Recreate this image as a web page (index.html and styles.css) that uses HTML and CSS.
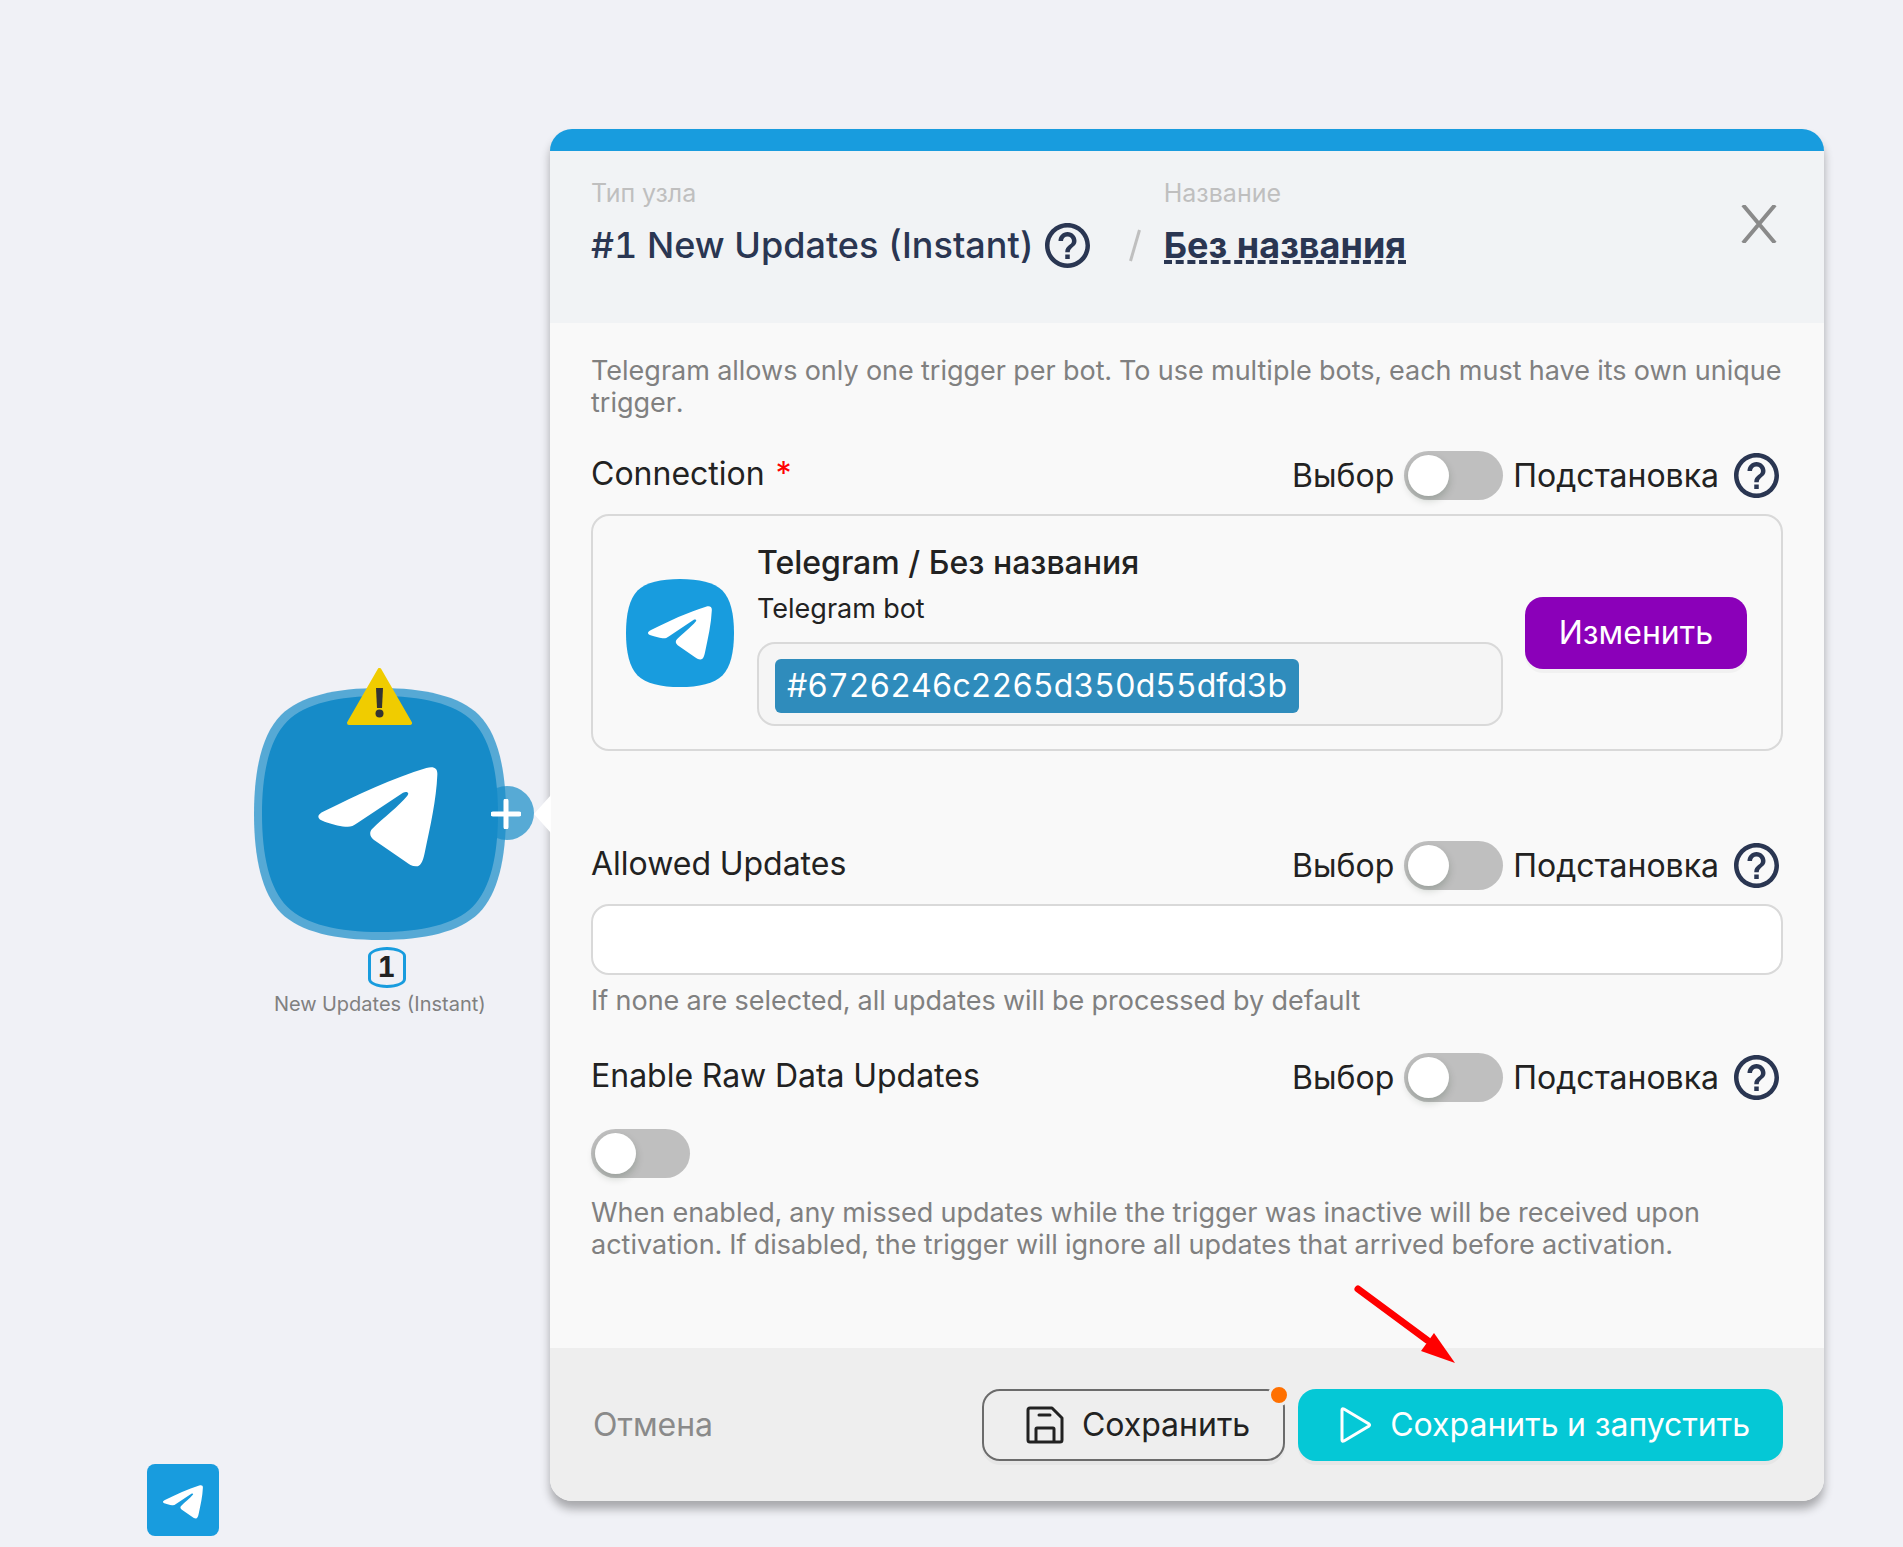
FILE: index.html
```html
<!DOCTYPE html>
<html lang="ru">
<head>
<meta charset="utf-8">
<title>New Updates (Instant)</title>
<link rel="stylesheet" href="styles.css">
</head>
<body>
<svg class="sprite" aria-hidden="true">
  <symbol id="help" viewBox="2 2 20 20"><path d="M11 18h2v-2h-2v2zm1-16C6.480 2 2 6.480 2 12s4.480 10 10 10 10-4.480 10-10S17.520 2 12 2zm0 18c-4.410 0-8-3.590-8-8s3.590-8 8-8 8 3.590 8 8-3.590 8-8 8zm0-14c-2.210 0-4 1.790-4 4h2c0-1.100.9-2 2-2s2 .9 2 2c0 2-3 1.750-3 5h2c0-2.250 3-2.500 3-5 0-2.210-1.790-4-4-4z"/></symbol>
  <symbol id="plane" viewBox="264 382 358 300"><path d="M281 515C380 466 488 415 588 385C612 379 622 386 621 405C618 480 600 560 583 640C577 668 570 681 557 680C545 680 535 673 527 667L430 600C418 591 416 577 426 567C460 533 505 500 531 468C539 458 528 454 518 459L380 551C368 560 358 563 345 561C325 559 300 552 283 546C258 538 258 526 281 515Z"/></symbol>
  <symbol id="squircle" viewBox="0 0 252 252"><path d="M0 126C0 82 8 46 27 27C46 8 82 0 126 0C170 0 206 8 225 27C244 46 252 82 252 126C252 170 244 206 225 225C206 244 170 252 126 252C82 252 46 244 27 225C8 206 0 170 0 126Z"/></symbol>
</svg>

<main class="canvas">
  <section class="node" aria-label="New Updates (Instant)">
    <div class="node-shape">
      <svg class="node-ring"><use href="#squircle"/></svg>
      <span class="node-port"></span>
      <svg class="node-core"><use href="#squircle"/></svg>
      <svg class="node-plane"><use href="#plane"/></svg>
      <button class="node-add" aria-label="Добавить узел">
        <svg viewBox="0 0 30 30"><path d="M15 2v26M2 15h26"/></svg>
      </button>
      <svg class="node-warning" viewBox="0 0 65 57">
        <path class="warning-sign" d="M32.500 2L63 55H2Z"/>
        <path class="warning-mark" d="M29 20h7l-1 20h-5z"/>
        <circle class="warning-mark" cx="32.500" cy="45.500" r="4"/>
      </svg>
    </div>
    <div class="node-number">1</div>
    <div class="node-label">New Updates (Instant)</div>
  </section>

  <button class="dock" aria-label="Telegram"><svg><use href="#plane"/></svg></button>

  <form class="panel">
    <span class="panel-pointer"></span>
    <header class="panel-header">
      <div class="head-col">
        <span class="caption">Тип узла</span>
        <div class="title-row">
          <h1 class="title">#1 New Updates (Instant)</h1>
          <button type="button" class="help" aria-label="Справка"><svg><use href="#help"/></svg></button>
          <svg class="slash" viewBox="0 0 12 33"><path d="M10.500 1L1.500 32"/></svg>
        </div>
      </div>
      <div class="head-col">
        <span class="caption">Название</span>
        <div class="title-row"><button type="button" class="name">Без названия</button></div>
      </div>
      <button type="button" class="close" aria-label="Закрыть">
        <svg viewBox="0 0 36 38"><path d="M2 0L34 38M34 0L2 38"/></svg>
      </button>
    </header>

    <div class="panel-body">
      <p class="hint">Telegram allows only one trigger per bot. To use multiple bots, each must have its own unique trigger.</p>

      <section class="field field-connection">
        <div class="field-head">
          <span class="label">Connection <span class="required">*</span></span>
          <label class="mode">Выбор <input type="checkbox" class="toggle"> Подстановка</label>
          <button type="button" class="help" aria-label="Справка"><svg><use href="#help"/></svg></button>
        </div>
        <div class="card">
          <div class="app-icon">
            <svg class="app-shape"><use href="#squircle"/></svg>
            <svg class="app-plane"><use href="#plane"/></svg>
          </div>
          <div class="card-info">
            <span class="card-title">Telegram / Без названия</span>
            <span class="card-sub">Telegram bot</span>
            <div class="token-box"><span class="token">#6726246c2265d350d55dfd3b</span></div>
          </div>
          <button type="button" class="btn btn-edit">Изменить</button>
        </div>
      </section>

      <section class="field">
        <div class="field-head">
          <label class="label" for="updates">Allowed Updates</label>
          <label class="mode">Выбор <input type="checkbox" class="toggle"> Подстановка</label>
          <button type="button" class="help" aria-label="Справка"><svg><use href="#help"/></svg></button>
        </div>
        <input class="text-input" id="updates" type="text">
        <p class="hint">If none are selected, all updates will be processed by default</p>
      </section>

      <section class="field">
        <div class="field-head">
          <label class="label" for="raw">Enable Raw Data Updates</label>
          <label class="mode">Выбор <input type="checkbox" class="toggle"> Подстановка</label>
          <button type="button" class="help" aria-label="Справка"><svg><use href="#help"/></svg></button>
        </div>
        <input class="toggle toggle-raw" id="raw" type="checkbox">
        <p class="hint">When enabled, any missed updates while the trigger was inactive will be received upon activation. If disabled, the trigger will ignore all updates that arrived before activation.</p>
      </section>
    </div>

    <footer class="panel-footer">
      <button type="button" class="cancel">Отмена</button>
      <button type="button" class="btn btn-save">
        <svg class="icon-save" viewBox="0 0 38 38"><path d="M4 2H26L36 12V34Q36 36 34 36H4Q2 36 2 34V4Q2 2 4 2ZM10 36V23Q10 22 11 22H27Q28 22 28 23V36M13 9H24"/></svg>
        Сохранить
        <span class="dot"></span>
      </button>
      <button type="button" class="btn btn-run">
        <svg class="icon-play" viewBox="0 0 32 36"><path d="M2 3Q2 1 4 2L29 17Q30 18 29 19L4 34Q2 35 2 33Z"/></svg>
        Сохранить и запустить
      </button>
      <svg class="arrow" viewBox="0 0 104 84"><path class="arrow-line" d="M7 9L76 60"/><path class="arrow-head" d="M83 53L104 83L70 71Z"/></svg>
    </footer>
  </form>
</main>
</body>
</html>
```
FILE: styles.css
```css
* { box-sizing: border-box; }

body {
  margin: 0;
  background: #f0f1f6;
  color: #222;
  font: 400 32px/40px Inter, "Noto Sans", sans-serif;
  font-feature-settings: "tnum";
}

h1, p { margin: 0; }

button {
  margin: 0;
  padding: 0;
  border: 0;
  background: none;
  color: inherit;
  font: inherit;
  font-feature-settings: inherit;
  cursor: pointer;
}

svg { display: block; }
.sprite { position: absolute; width: 0; height: 0; }

/* Canvas */
.canvas {
  position: relative;
  min-height: 100vh;
  padding: 129px 79px 46px 550px;
}

.node {
  position: absolute;
  left: 254px;
  top: 688px;
  width: 252px;
  display: flex;
  flex-direction: column;
  align-items: center;
}
.node-shape { position: relative; width: 252px; height: 252px; }
.node-shape > * { position: absolute; }
.node-ring { width: 252px; height: 252px; fill: #168bc8; opacity: .7; }
.node-core { left: 8px; top: 8px; width: 236px; height: 236px; fill: #168bc8; }
.node-port {
  left: 226px;
  top: 98px;
  width: 54px;
  height: 54px;
  border-radius: 50%;
  background: #168bc8;
  opacity: .7;
}
.node-plane { left: 64px; top: 79px; width: 120px; height: 100px; fill: #fff; }
.node-add { left: 237px; top: 111px; width: 30px; height: 30px; }
.node-add svg { width: 30px; height: 30px; stroke: #fff; stroke-width: 5; stroke-linecap: round; }
.node-warning { left: 93px; top: -20px; width: 65px; height: 57px; }
.warning-sign { fill: #f0cc00; stroke: #f0cc00; stroke-width: 4; stroke-linejoin: round; }
.warning-mark { fill: #333; }
.node-number {
  width: 38px;
  height: 41px;
  margin: 7px 0 0 13px;
  border: 3px solid #189cde;
  border-radius: 19px / 9px;
  font-size: 28px;
  line-height: 34px;
  font-weight: 700;
  text-align: center;
}
.node-label { font-size: 20px; line-height: 32px; color: #808080; white-space: nowrap; }

.dock {
  position: absolute;
  left: 147px;
  top: 1464px;
  width: 72px;
  height: 72px;
  display: grid;
  place-items: center;
  padding-top: 3px;
  border-radius: 8px;
  background: #189cde;
}
.dock svg { width: 40px; height: 34px; fill: #fff; }

/* Panel */
.panel {
  position: relative;
  border-top: 22px solid #189cde;
  border-radius: 22px;
  background: #f9f9f9;
  box-shadow: 0 8px 10px rgba(0, 0, 0, .3);
}
.panel-pointer {
  position: absolute;
  left: -16px;
  top: 644px;
  width: 17px;
  height: 38px;
  background: #fff;
  clip-path: polygon(100% 0, 0 50%, 100% 100%);
}
.panel-header {
  display: flex;
  align-items: flex-start;
  padding: 26px 47px 52px 41px;
  background: #f1f3f5;
}
.caption { display: block; font-size: 25px; line-height: 32px; color: #bfbfbf; }
.title-row { display: flex; align-items: center; height: 62px; padding-top: 10px; }
.title { font-size: 36px; line-height: 44px; font-weight: 500; color: #2a3652; margin-right: 11px; white-space: nowrap; }
.slash { width: 12px; height: 33px; margin: 0 23px 0 39px; stroke: #bfbfbf; stroke-width: 3; fill: none; }
.name {
  height: 42px;
  margin-bottom: 4px;
  padding-top: 8px;
  border-bottom: 4px dashed #2a3652;
  color: #2a3652;
  font-size: 36px;
  line-height: 30px;
  font-weight: 700;
  white-space: nowrap;
}
.help { flex: none; width: 45px; height: 45px; }
.help svg { width: 45px; height: 45px; fill: #2a3652; }
.close { margin: 28px 0 0 auto; }
.close svg { width: 36px; height: 38px; stroke: #8a8a8a; stroke-width: 4; }

.panel-body { padding: 32px 41px 87px; }
.hint { font-size: 27px; line-height: 32px; color: #808080; }
.field { margin-top: 36px; }
.field-connection { margin: 32px 0 90px; }
.field-head { display: flex; align-items: center; height: 49px; margin-bottom: 14px; }
.label { margin-right: auto; padding-bottom: 4px; }
.required { color: #f00; }
.mode { display: flex; align-items: center; gap: 10px; margin-right: 15px; }
.field-head .help { margin-right: 4px; }

.toggle {
  appearance: none;
  display: block;
  flex: none;
  width: 99px;
  height: 49px;
  margin: 0;
  padding: 4px;
  border-radius: 25px;
  background: #bfbfbf;
}
.toggle::before {
  content: "";
  display: block;
  width: 41px;
  height: 41px;
  border-radius: 50%;
  background: #fff;
  box-shadow: 0 4px 8px rgba(0, 35, 11, .2);
}
.toggle:checked::before { margin-left: auto; }
.toggle-raw { margin: 27px 0 19px; }

.card {
  display: flex;
  align-items: center;
  padding: 23px 34px 23px 33px;
  border: 2px solid #d9d9d9;
  border-radius: 18px;
}
.app-icon { display: grid; place-items: center; flex: none; width: 108px; height: 108px; }
.app-icon > svg { grid-area: 1 / 1; }
.app-shape { width: 108px; height: 108px; fill: #189cde; }
.app-plane { width: 64px; height: 54px; fill: #fff; }
.card-info { flex: 1; display: flex; flex-direction: column; margin: 0 22px 0 23px; }
.card-title { line-height: 48px; font-weight: 500; }
.card-sub { font-size: 27px; line-height: 44px; margin-bottom: 11px; }
.token-box {
  display: flex;
  padding: 15px 16px 11px;
  border: 2px solid #d9d9d9;
  border-radius: 18px;
  background: #f5f5f5;
}
.token { padding: 7px 12px; border-radius: 6px; background: #2f8cbc; color: #fff; }

.btn {
  display: flex;
  align-items: center;
  height: 72px;
  border-radius: 18px;
  white-space: nowrap;
  box-shadow: 0 4px 0 rgba(0, 0, 0, .03);
}
.btn-edit { padding: 0 34px; background: #8b00b9; color: #fff; }

.text-input {
  display: block;
  width: 100%;
  height: 71px;
  margin-bottom: 10px;
  padding: 0 20px;
  border: 2px solid #d9d9d9;
  border-radius: 18px;
  background: #fff;
  font: inherit;
}

.panel-footer {
  position: relative;
  display: flex;
  align-items: center;
  gap: 13px;
  padding: 41px 41px 40px;
  border-radius: 0 0 22px 22px;
  background: #eee;
}
.cancel { margin: 0 auto 0 2px; color: #8a8a8a; }
.btn-save { position: relative; gap: 18px; padding: 0 33px 0 42px; border: 2px solid #6b6b6b; }
.dot {
  position: absolute;
  right: -7px;
  top: -7px;
  width: 22px;
  height: 22px;
  border: 3px solid #eee;
  border-radius: 50%;
  background: #ff7000;
}
.icon-save { width: 38px; height: 38px; fill: none; stroke: #222; stroke-width: 3; stroke-linecap: round; stroke-linejoin: round; }
.btn-run { gap: 18px; padding: 0 33px 0 42px; background: #05c8d6; color: #fff; }
.icon-play { width: 32px; height: 36px; fill: none; stroke: #fff; stroke-width: 3; }
.arrow { position: absolute; right: 369px; top: -68px; width: 104px; height: 84px; }
.arrow-line { stroke: #f00; stroke-width: 7; stroke-linecap: round; }
.arrow-head { fill: #f00; }
```
